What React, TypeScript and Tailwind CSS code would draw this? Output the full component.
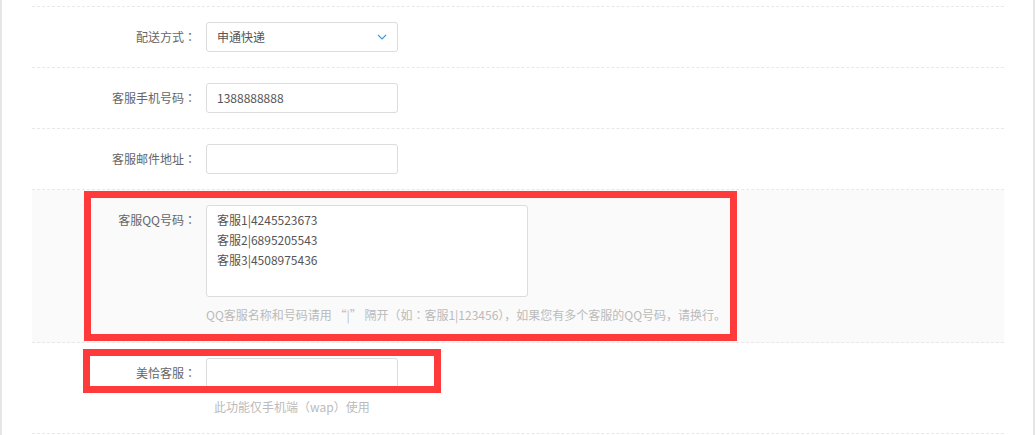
import React from 'react';

const font = { fontFamily: '"Noto Sans CJK SC", "Noto Sans", sans-serif' };

// full-width colon, centred like the original's YaHei glyph
function Colon() {
    return <span className="inline-block w-[12px] text-center" style={{ fontFamily: '"Noto Sans CJK TC", sans-serif' }}>：</span>;
}

function Row({ label, children, top = false, shaded = false }: { label: string; children: React.ReactNode; top?: boolean; shaded?: boolean }) {
    return (
        <div className={`flex border-b border-dashed border-[#e8e8e8] ${shaded ? 'bg-[#fafafa]' : 'bg-white'}`}>
            <div className={`w-[164px] shrink-0 text-right text-[12px] text-[#666] ${top ? 'pt-[20px] leading-[20px]' : 'pt-[15px] leading-[30px]'}`}>
                {label}<Colon />
            </div>
            <div className="ml-[10px] flex-1">{children}</div>
        </div>
    );
}

export default function App() {
    return (
        <div className="relative w-[1035px] h-[435px] overflow-hidden bg-white" style={font}>
            <div className="flex h-full">
                <div className="w-[2px] bg-[#e6e6e6] shrink-0" />
                <div className="flex-1 pl-[30px] pr-[29px]">
                    <div className="h-[7px] border-b border-dashed border-[#e8e8e8]" />

                    <Row label="配送方式">
                        <div className="py-[15px]">
                            <div className="w-[192px] h-[30px] border border-[#dcdcdc] rounded-[3px] bg-white flex items-center justify-between pl-[10px] pr-[10px] text-[12px] text-[#555]">
                                <span>申通快递</span>
                                <svg width="10" height="6" viewBox="0 0 10 6" fill="none">
                                    <path d="M1 1l4 4 4-4" stroke="#3a9de0" strokeWidth="1.2" />
                                </svg>
                            </div>
                        </div>
                    </Row>

                    <Row label="客服手机号码">
                        <div className="py-[15px]">
                            <div className="w-[192px] h-[30px] border border-[#dcdcdc] rounded-[3px] bg-white flex items-center px-[10px] text-[12px] text-[#555]">
                                1388888888
                            </div>
                        </div>
                    </Row>

                    <Row label="客服邮件地址">
                        <div className="py-[15px]">
                            <div className="w-[192px] h-[30px] border border-[#dcdcdc] rounded-[3px] bg-white" />
                        </div>
                    </Row>

                    <Row label="客服QQ号码" top shaded>
                        <div className="pt-[15px] pb-[17px]">
                            <div className="w-[322px] h-[92px] border border-[#dcdcdc] rounded-[3px] bg-white px-[10px] pt-[4px] text-[12px] leading-[20px] text-[#555]">
                                <div>客服1|4245523673</div>
                                <div>客服2|6895205543</div>
                                <div>客服3|4508975436</div>
                            </div>
                            <div className="mt-[8px] text-[12px] leading-[20px] text-[#bbb] whitespace-nowrap">
                                QQ客服名称和号码请用 “|” 隔开（如<Colon />客服1|123456），如果您有多个客服的QQ号码，请换行。
                            </div>
                        </div>
                    </Row>

                    <Row label="美恰客服">
                        <div className="pt-[15px] pb-[16px]">
                            <div className="w-[192px] h-[30px] border border-[#dcdcdc] rounded-[3px] bg-white" />
                            <div className="mt-[9px] pl-[8px] text-[12px] leading-[20px] text-[#bbb]">此功能仅手机端（wap）使用</div>
                        </div>
                    </Row>
                </div>
                <div className="w-[2px] bg-[#e6e6e6] shrink-0" />
            </div>

            {/* annotation boxes */}
            <div className="absolute left-[84px] top-[191px] w-[653px] h-[150px] border-[7px] border-[#ff3a3a]" />
            <div className="absolute left-[83px] top-[349px] w-[358px] h-[44px] border-[7px] border-[#ff3a3a]" />
        </div>
    );
}
